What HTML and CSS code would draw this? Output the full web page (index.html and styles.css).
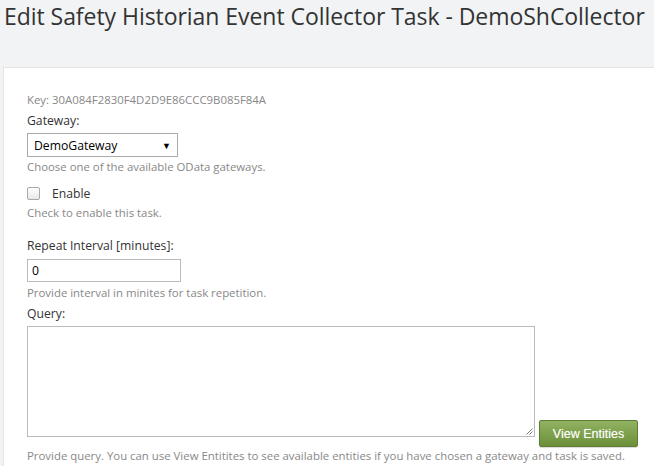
FILE: index.html
```html
<!DOCTYPE html>
<html>
<head>
<meta charset="utf-8">
<link rel="stylesheet" href="styles.css">
</head>
<body>
<h1 class="title">Edit Safety Historian Event Collector Task - DemoShCollector</h1>
<div class="panel">
  <div class="key">Key: 30A084F2830F4D2D9E86CCC9B085F84A</div>
  <div class="label">Gateway:</div>
  <div class="select"><span>DemoGateway</span><span class="arrow">&#9660;</span></div>
  <div class="help">Choose one of the available OData gateways.</div>
  <label class="check"><span class="box"></span><span>Enable</span></label>
  <div class="help h-check">Check to enable this task.</div>
  <div class="label gap">Repeat Interval [minutes]:</div>
  <div class="input">0</div>
  <div class="help h-input">Provide interval in minites for task repetition.</div>
  <div class="label l-query">Query:</div>
  <div class="query-row">
    <div class="textarea">
      <svg class="grip" width="8" height="8" viewBox="0 0 8 8"><path d="M7.5 1.5L1.5 7.5M7.5 4.5L4.5 7.5" stroke="#777" stroke-width="1" fill="none"/></svg>
    </div>
    <button class="btn">View Entities</button>
  </div>
  <div class="help h-query">Provide query. You can use View Entitites to see available entities if you have chosen a gateway and task is saved.</div>
</div>
</body>
</html>
```
FILE: styles.css
```css
html, body { margin: 0; padding: 0; }
body {
  background: #f2f3f5;
  font-family: "Open Sans", "Noto Sans", sans-serif;
  color: #333;
  width: 654px;
  height: 466px;
  overflow: hidden;
}
.title {
  margin: 0;
  padding: 1px 0 0 4px;
  font-weight: 400;
  font-size: 23px;
  line-height: 30px;
  color: #333;
  letter-spacing: -0.05px;
  white-space: nowrap;
}
.panel {
  margin: 36px 0 0 3px;
  background: #fff;
  border-top: 1px solid #e3e3e3;
  border-left: 1px solid #e3e3e3;
  padding: 24px 0 0 23px;
  height: 374px;
  box-sizing: content-box;
  font-size: 12px;
}
.key { color: #888; font-size: 11.4px; line-height: 16px; }
.label { font-size: 12.2px; line-height: 17px; margin-top: 4px; color: #333; }
.label.gap { margin-top: 16px; }
.label.l-query { margin-top: 4px; }
.select {
  width: 137px; height: 22px;
  border: 1px solid #aaa;
  margin-top: 4px;
  display: flex; justify-content: space-between; align-items: center;
  padding: 0 6px 0 6px;
  font-size: 12.2px; color: #000;
}
.arrow { font-size: 9px; }
.help { color: #888; font-size: 11.4px; line-height: 16px; margin-top: 2px; }
.help.h-check { margin-top: 3px; }
.help.h-input { margin-top: 3px; }
.help.h-query { margin-top: 12px; line-height: 14px; }
.check { display: flex; align-items: center; margin-top: 9px; height: 18px; font-size: 12.2px; }
.box {
  width: 11px; height: 11px; border: 1px solid #aaa; border-radius: 2px;
  background: linear-gradient(#fff, #e8e8e8);
  margin-right: 12px;
}
.input {
  width: 148px; height: 21px; border: 1px solid #bbb;
  margin-top: 5px; padding-left: 4px;
  font-size: 12.2px; line-height: 21px; color: #000;
}
.query-row { display: flex; align-items: flex-end; margin-top: 4px; }
.textarea {
  width: 506px; height: 109px; border: 1px solid #bbb; position: relative;
}
.grip { position: absolute; right: 1px; bottom: 1px; }
.btn {
  margin: 0 0 -10px 4px;
  width: 99px; height: 27px;
  box-sizing: border-box;
  border: 1px solid #5d7d33; border-radius: 2px;
  background: linear-gradient(#91b262, #6b9039);
  box-shadow: 0 1px 1px rgba(0,0,0,0.15);
  color: #fff; font-family: "Liberation Sans", Arial, sans-serif;
  font-size: 12.5px; padding: 0;
  text-shadow: 0 0 1px rgba(255,255,255,0.4);
}
```
